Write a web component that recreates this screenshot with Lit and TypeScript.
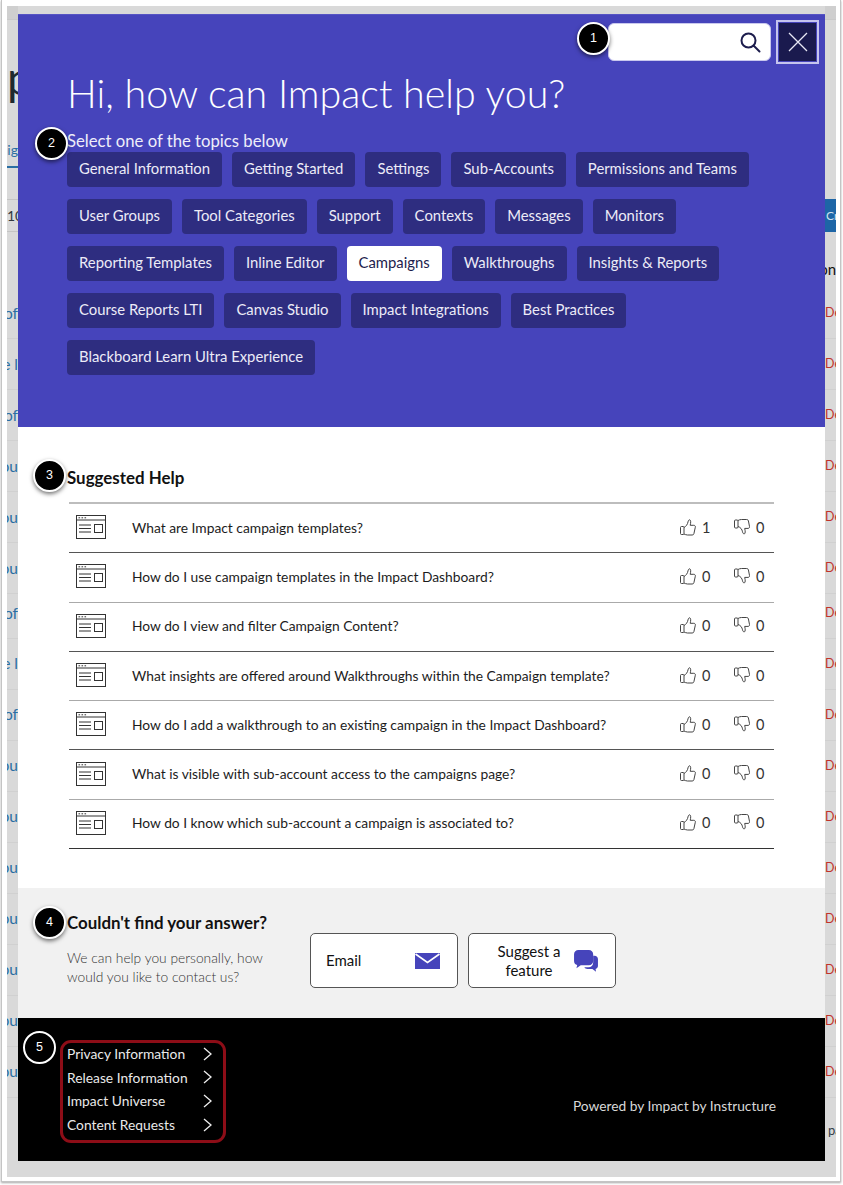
import { LitElement, html, css, svg } from "lit";
import { customElement } from "lit/decorators.js";

const TOPICS = [
  ["General Information", "Getting Started", "Settings", "Sub-Accounts", "Permissions and Teams"],
  ["User Groups", "Tool Categories", "Support", "Contexts", "Messages", "Monitors"],
  ["Reporting Templates", "Inline Editor", "Campaigns", "Walkthroughs", "Insights & Reports"],
  ["Course Reports LTI", "Canvas Studio", "Impact Integrations", "Best Practices"],
  ["Blackboard Learn Ultra Experience"],
];

const HELP: [string, number, number][] = [
  ["What are Impact campaign templates?", 1, 0],
  ["How do I use campaign templates in the Impact Dashboard?", 0, 0],
  ["How do I view and filter Campaign Content?", 0, 0],
  ["What insights are offered around Walkthroughs within the Campaign template?", 0, 0],
  ["How do I add a walkthrough to an existing campaign in the Impact Dashboard?", 0, 0],
  ["What is visible with sub-account access to the campaigns page?", 0, 0],
  ["How do I know which sub-account a campaign is associated to?", 0, 0],
];

const LEFT_ROWS = ["of", "e l", "of", "ou", "ou", "ou", "of", "e l", "of", "ou", "ou", "ou", "ou", "ou", "ou", "ou"];
const LINKS = ["Privacy Information", "Release Information", "Impact Universe", "Content Requests"];

const docIcon = svg`<svg class="doc" viewBox="0 0 30 24" width="30" height="24" fill="none" stroke="#333" stroke-width="1">
  <rect x="0.5" y="0.5" width="29" height="23"/><path d="M0.5 5h29"/>
  <path d="M2.5 2.8h1.6M5.5 2.8h1.6M8.5 2.8h1.6" stroke-width="1"/>
  <path d="M3 10h12M3 13.5h12M3 17h12"/><rect x="18.5" y="9.5" width="8" height="8"/></svg>`;

const thumbUp = svg`<svg viewBox="0 0 16 17" width="16" height="17" fill="none" stroke="#444" stroke-width="1" stroke-linejoin="round">
  <rect x="0.5" y="7.5" width="3.5" height="8" rx="1"/>
  <path d="M4 8.5c2-1 3.6-3.2 4-5.6.2-1.400 1.200-2.400 2-2 .9.5.9 2.600.2 5.400h3.600c1.200 0 1.800 1 1.500 2l-1.400 6.400c-.2.900-.9 1.300-1.700 1.300H7.500c-1.400 0-2.400-.6-3.500-1"/></svg>`;

const thumbDown = svg`<svg viewBox="0 0 16 17" width="16" height="17" fill="none" stroke="#444" stroke-width="1" stroke-linejoin="round">
  <rect x="0.5" y="1" width="3.500" height="8" rx="1"/>
  <path d="M4 1.500C5.100.9 6.100.5 7.500.5h5.200c.8 0 1.500.4 1.700 1.300l1.100 5.700c.2 1-.4 1.900-1.500 1.900h-3.300c.7 2.800.7 4.900-.2 5.400-.8.400-1.800-.6-2-2-.4-2.400-2-4.600-4.500-5.300"/></svg>`;

@customElement("app-root")
export class AppRoot extends LitElement {
  static styles = css`
    :host { display: block; width: 843px; height: 1185px; background: #fff; font-family: Lato, "Open Sans", sans-serif; overflow: hidden; }
    * { box-sizing: border-box; }
    .sheet { width: 840px; height: 1182px; margin-left: 1px; padding: 6px 4px 0 5px; border: 1px solid #c4c4c4; border-top: 0; box-shadow: 0 1px 2px rgba(0,0,0,.35); background: #fff; position: relative; }
    .frame { display: grid; grid-template-columns: 11px 807px 11px; width: 829px; height: 1171px; background: #d9d9d9; overflow: hidden; }

    .strip { display: flex; flex-direction: column; overflow: hidden; white-space: nowrap; font-size: 15px; }
    .band { height: 14px; flex: none; background: #cfcfcf; border-bottom: 1px solid #c9c9c9; }
    .title { height: 108px; flex: none; font-size: 46px; color: #1f292f; line-height: 108px; padding-top: 4px; }
    .tabs { height: 40px; flex: none; border-bottom: 2px solid #2a6ea3; color: #2a6ea3; font-size: 14px; display: flex; align-items: center; justify-content: flex-end; padding-top: 4px; }
    .spacer { height: 31px; flex: none; }
    .count { height: 33px; flex: none; border-top: 1px solid #c4c4c4; border-bottom: 1px solid #c4c4c4; color: #33393d; font-size: 14px; display: flex; align-items: center; }
    .head { height: 56px; flex: none; }
    .row { height: 51px; flex: none; display: flex; align-items: center; justify-content: flex-end; padding-bottom: 1px; border-bottom: 1px solid #d0d0d0; color: #2a6ea3; font-size: 15.500px; }
    .row.short { height: 44.500px; padding-bottom: 6px; }

    .strip.right .tabs-gap { height: 179px; flex: none; }
    .cta { height: 33px; flex: none; background: #1d65a6; color: #cfe0ee; display: flex; align-items: center; font-size: 12px; padding-left: 1px; }
    .strip.right .head { display: flex; align-items: center; color: #111; font-size: 15px; padding-top: 18px; justify-content: flex-end; }
    .strip.right .row { justify-content: flex-start; color: #c1332b; font-size: 12.500px; }
    .pa { height: 50px; flex: none; padding: 24px 0 0 3px; color: #34404a; font-size: 13px; }

    .modal { margin-top: 8px; height: 1147px; display: flex; flex-direction: column; background: #fff; }

    .hero { height: 413px; flex: none; background: #4644bb; padding: 5px 6px 0 49px; color: #fff; border-top: 1px solid #5654c4; }
    .tools { display: flex; justify-content: flex-end; align-items: center; gap: 5px; height: 44px; }
    .search { width: 163px; height: 38px; background: #fff; border: 1px solid #c9c8ee; border-radius: 6px; display: flex; align-items: center; justify-content: flex-end; padding-right: 9px; }
    .close { width: 43px; height: 44px; background: #1a1a4e; border: 2px solid #c5c4ee; outline: 1px solid #4644bb; outline-offset: -3px; display: flex; align-items: center; justify-content: center; padding: 0; }
    h1 { margin: 5px 0 0; font-size: 39.400px; line-height: 48px; font-weight: 300; }
    .sub { margin-top: 13px; font-size: 16.700px; line-height: 22px; height: 22px; color: #eeeef9; }
    .topics { display: flex; flex-direction: column; gap: 12px; }
    .topic-row { display: flex; gap: 10px; }
    .topic { height: 35px; padding: 0 12px 3px; display: flex; align-items: center; background: #2e2d80; color: #ecebf7; border-radius: 4px; font-size: 14.850px; white-space: nowrap; }
    .topic.on { background: #fff; color: #1d1d4d; }

    .help { height: 461px; flex: none; padding: 39px 51px 0 49px; }
    h2 { margin: 0; font-size: 16.900px; line-height: 24px; font-weight: 700; color: #111; }
    .list { margin: 12px 0 0 2px; border-top: 2px solid #bdbdbd; }
    .item { height: 49.300px; display: flex; align-items: center; border-bottom: 1px solid #555; color: #1c1c1c; font-size: 13.800px; padding: 0 0 2px 7px; }
    .item:nth-child(even) { border-bottom-color: #aaa; }
    .item:last-child { border-bottom-color: #333; }
    .doc { flex: none; margin-right: 26px; }
    .q { flex: 1; }
    .vote { display: flex; align-items: center; gap: 6px; width: 54px; font-size: 14.500px; color: #333; }
    .vote.down { width: 40px; }

    .contact { height: 130px; flex: none; background: #f1f1f1; padding: 23px 0 0 49px; display: flex; }
    .contact-copy { width: 243px; flex: none; }
    .contact-copy p { margin: 13px 0 0; font-size: 13.800px; line-height: 19px; font-weight: 300; color: #333; }
    .contact-btns { display: flex; gap: 10px; margin-top: 22px; height: 55px; }
    .cbtn { width: 148px; height: 55px; background: #fff; border: 1px solid #555; border-radius: 5px; display: flex; align-items: center; font-size: 15px; line-height: 19px; color: #111; padding: 0 17px 0 15px; justify-content: space-between; }
    .cbtn .two { text-align: center; flex: 1; }

    .foot { flex: 1; background: #000; color: #e6e6e6; display: flex; justify-content: space-between; padding: 22px 49px 0 42px; font-size: 13.800px; }
    .links { width: 166px; height: 103px; border: 3px solid #8d0d17; border-radius: 11px; padding: 0 0 0 4px; display: flex; flex-direction: column; }
    .links a { height: 23.600px; flex: none; display: flex; align-items: center; justify-content: space-between; padding: 0 11px 2px 0; color: #e9e9e9; }
    .powered { margin-top: 57px; line-height: 17px; color: #d8d8d8; font-size: 13.750px; }

    .mark { position: absolute; width: 33px; height: 33px; border-radius: 50%; background: #000; border: 2px solid #fff; color: #fff; font: 12.500px/29px "Liberation Sans", Arial, sans-serif; text-align: center; box-shadow: 0 2px 4px rgba(0,0,0,.55); }
    .m1 { left: 575px; top: 22px; }
    .m2 { left: 33px; top: 127px; }
    .m3 { left: 31px; top: 459px; }
    .m4 { left: 31px; top: 906px; }
    .m5 { left: 21px; top: 1031px; box-shadow: none; }
  `;

  private renderLeft() {
    return html`<div class="strip left">
      <div class="band"></div>
      <div class="title">p</div>
      <div class="tabs">aig</div>
      <div class="spacer"></div>
      <div class="count">10</div>
      <div class="head"></div>
      ${LEFT_ROWS.map((t, i) => html`<div class="row ${i === 6 ? "short" : ""}">${t}</div>`)}
    </div>`;
  }

  private renderRight() {
    return html`<div class="strip right">
      <div class="band"></div>
      <div class="tabs-gap"></div>
      <div class="cta">Cr</div>
      <div class="head">on</div>
      ${LEFT_ROWS.map((_, i) => html`<div class="row ${i === 6 ? "short" : ""}">De</div>`)}
      <div class="pa">pa</div>
    </div>`;
  }

  render() {
    return html`<div class="sheet">
      <div class="frame">
        ${this.renderLeft()}
        <div class="modal">
          <section class="hero">
            <div class="tools">
              <div class="search">
                <svg viewBox="0 0 22 22" width="22" height="22" fill="none" stroke="#1d1d4d" stroke-width="2"><circle cx="9.500" cy="9.500" r="7"/><path d="M14.500 14.500l6 6" stroke-linecap="round"/></svg>
              </div>
              <button class="close" aria-label="Close">
                <svg viewBox="0 0 20 20" width="20" height="20" stroke="#e8e8f5" stroke-width="1.300" fill="none"><path d="M1 1l18 18M19 1L1 19"/></svg>
              </button>
            </div>
            <h1>Hi, how can Impact help you?</h1>
            <div class="sub">Select one of the topics below</div>
            <div class="topics">
              ${TOPICS.map((r) => html`<div class="topic-row">${r.map((t) => html`<div class="topic ${t === "Campaigns" ? "on" : ""}">${t}</div>`)}</div>`)}
            </div>
          </section>

          <section class="help">
            <h2>Suggested Help</h2>
            <div class="list">
              ${HELP.map(([q, u, d]) => html`<div class="item">
                ${docIcon}
                <span class="q">${q}</span>
                <span class="vote">${thumbUp}<span>${u}</span></span>
                <span class="vote down">${thumbDown}<span>${d}</span></span>
              </div>`)}
            </div>
          </section>

          <section class="contact">
            <div class="contact-copy">
              <h2>Couldn't find your answer?</h2>
              <p>We can help you personally, how<br />would you like to contact us?</p>
            </div>
            <div class="contact-btns">
              <div class="cbtn">
                <span>Email</span>
                <svg viewBox="0 0 25 16" width="25" height="16"><path fill="#4644bb" d="M0 0h25v16H0z"/><path d="M0.500 1l12 8.500 12-8.500" fill="none" stroke="#fff" stroke-width="1.600"/></svg>
              </div>
              <div class="cbtn">
                <span class="two">Suggest a<br />feature</span>
                <svg viewBox="0 0 25 23" width="24" height="22" style="flex:none">
                  <path fill="#4644bb" d="M20 6h1.500c2 0 3.500 1.500 3.500 3.500v7c0 1.700-1 3-2.500 3.300l.5 3-3.800-3H14c-1.500 0-2.700-.7-3.200-1.800H15c3 0 5-2 5-5z"/>
                  <path fill="#4644bb" d="M4.500 0h11C18 0 20 2 20 4.500v7c0 2.500-2 4.500-4.500 4.500H7l-4.500 3 .8-3.200C1.300 15.300 0 13.600 0 11.500v-7C0 2 2 0 4.500 0z"/>
                </svg>
              </div>
            </div>
          </section>

          <footer class="foot">
            <nav class="links">
              ${LINKS.map((l) => html`<a>${l}<svg viewBox="0 0 9 14" width="9" height="14" fill="none" stroke="#eee" stroke-width="1.300"><path d="M1 1l7 6-7 6"/></svg></a>`)}
            </nav>
            <div class="powered">Powered by Impact by Instructure</div>
          </footer>
        </div>
        ${this.renderRight()}
      </div>
      <div class="mark m1">1</div>
      <div class="mark m2">2</div>
      <div class="mark m3">3</div>
      <div class="mark m4">4</div>
      <div class="mark m5">5</div>
    </div>`;
  }
}
